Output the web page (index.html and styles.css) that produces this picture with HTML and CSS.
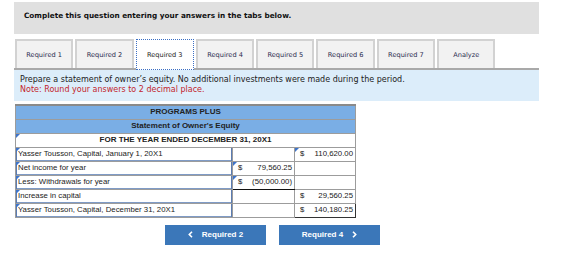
FILE: index.html
```html
<!DOCTYPE html>
<html>
<head>
<meta charset="utf-8">
<link rel="stylesheet" href="styles.css">
</head>
<body>
<div class="wrap">
  <div class="banner">Complete this question entering your answers in the tabs below.</div>
  <div class="tabs">
    <div class="tab">Required 1</div>
    <div class="tab">Required 2</div>
    <div class="tab active">Required 3</div>
    <div class="tab">Required 4</div>
    <div class="tab">Required 5</div>
    <div class="tab">Required 6</div>
    <div class="tab">Required 7</div>
    <div class="tab">Analyze</div>
  </div>
  <div class="prompt">
    <div>Prepare a statement of owner’s equity. No additional investments were made during the period.</div>
    <div class="note">Note: Round your answers to 2 decimal place.</div>
  </div>
  <table class="sheet">
    <colgroup><col class="c-label"><col class="c-mid"><col class="c-right"></colgroup>
    <tr><td colspan="3" class="head bold">PROGRAMS PLUS</td></tr>
    <tr><td colspan="3" class="head bold">Statement of Owner's Equity</td></tr>
    <tr><td colspan="3" class="period bold flag">FOR THE YEAR ENDED DECEMBER 31, 20X1</td></tr>
    <tr>
      <td class="label flag">Yasser Tousson, Capital, January 1, 20X1</td>
      <td class="amt"></td>
      <td class="amt flag"><span class="cur">$</span><span class="num">110,620.00</span></td>
    </tr>
    <tr>
      <td class="label flag">Net income for year</td>
      <td class="amt flag"><span class="cur">$</span><span class="num">79,560.25</span></td>
      <td class="amt"></td>
    </tr>
    <tr>
      <td class="label flag">Less: Withdrawals for year</td>
      <td class="amt flag sub"><span class="cur">$</span><span class="num">(50,000.00)</span></td>
      <td class="amt"></td>
    </tr>
    <tr>
      <td class="label flag">Increase in capital</td>
      <td class="amt"></td>
      <td class="amt top"><span class="cur">$</span><span class="num">29,560.25</span></td>
    </tr>
    <tr>
      <td class="label flag">Yasser Tousson, Capital, December 31, 20X1</td>
      <td class="amt"></td>
      <td class="amt total"><span class="cur">$</span><span class="num">140,180.25</span></td>
    </tr>
  </table>
  <div class="nav">
    <div class="btn">
      <svg class="arr" width="5" height="7" viewBox="0 0 5 7"><path d="M4 0.8 L1.3 3.5 L4 6.2" fill="none" stroke="#fff" stroke-width="1.6"/></svg>
      Required 2
    </div>
    <div class="btn">
      Required 4
      <svg class="arr right" width="5" height="7" viewBox="0 0 5 7"><path d="M1 0.8 L3.7 3.5 L1 6.2" fill="none" stroke="#fff" stroke-width="1.6"/></svg>
    </div>
  </div>
</div>
</body>
</html>
```
FILE: styles.css
```css
body {
  margin: 0;
  background: #fff;
}

.wrap {
  margin: 2px 0 0 14px;
  width: 525px;
}

.banner {
  height: 32px;
  box-sizing: border-box;
  padding: 9px 0 0 10px;
  background: #e0e0e0;
  font: bold 7.3px "DejaVu Sans", Verdana, sans-serif;
  color: #111;
}

.tabs {
  display: flex;
  gap: 2px;
  margin-top: 5px;
  padding-left: 1px;
  border-bottom: 2px solid #a9a9a9;
}

.tab {
  width: 58.3px;
  height: 29px;
  box-sizing: border-box;
  border: 2px solid #d2d2d2;
  border-bottom: none;
  background: #f2f2f2;
  display: flex;
  align-items: center;
  justify-content: center;
  font: 6.6px "DejaVu Sans", Verdana, sans-serif;
  color: #2a2a4e;
}

.tab.active {
  background: #fff;
  border: 1px dotted #3b6fc4;
  margin-bottom: -2px;
  height: 31px;
  color: #222;
}

.prompt {
  height: 31px;
  box-sizing: border-box;
  padding: 5px 0 0 6px;
  background: #dcedfa;
  font: 8px "DejaVu Sans", Verdana, sans-serif;
  line-height: 9.5px;
  color: #222;
}

.prompt .note {
  color: #c3262c;
}

.sheet {
  margin: 3px 0 0 1px;
  border-collapse: collapse;
  table-layout: fixed;
  width: 340px;
  border-top: 2px solid #8a8a8a;
  font: 7.8px "Liberation Sans", Arial, sans-serif;
  color: #222;
}

.c-label { width: 217px; }
.c-mid { width: 62px; }
.c-right { width: 61px; }

.sheet td {
  height: 14px;
  box-sizing: border-box;
  padding: 0 2px;
  border: 1px solid #9c9c9c;
  position: relative;
  white-space: nowrap;
  line-height: 12px;
}

.bold {
  font-weight: bold;
  font-size: 8px;
}

.head {
  background: #7aaee5;
  text-align: center;
  border-color: #7d8a9a;
}

.period {
  text-align: center;
  background: #fff;
}

.label {
  box-shadow: inset 1px 0 0 #5b7cb2, inset -1px 0 0 #5b7cb2, inset 0 -1px 0 #7f9bc6;
}

.amt {
  background: #fff;
}

.amt .cur {
  float: left;
  padding-left: 3px;
}

.amt .num {
  float: right;
}

.amt.sub {
  border-bottom: 1px solid #111;
}

.amt.top {
  border-top: 1px solid #111;
}

.amt.total {
  border: 1px solid #333;
}

/* comment marker in the top-left corner of a cell */
.flag::before {
  content: "";
  position: absolute;
  left: 0;
  top: 0;
  border-top: 4px solid #3e74c9;
  border-right: 4px solid transparent;
}

.nav {
  display: flex;
  gap: 13px;
  margin: 7px 0 0 151px;
}

.btn {
  width: 101px;
  height: 20px;
  background: #3b77b9;
  color: #fff;
  font: bold 8px "Liberation Sans", Arial, sans-serif;
  display: flex;
  align-items: center;
  justify-content: center;
  gap: 0;
}

.arr {
  margin-right: 9px;
}

.arr.right {
  margin: 0 0 0 9px;
}
```
